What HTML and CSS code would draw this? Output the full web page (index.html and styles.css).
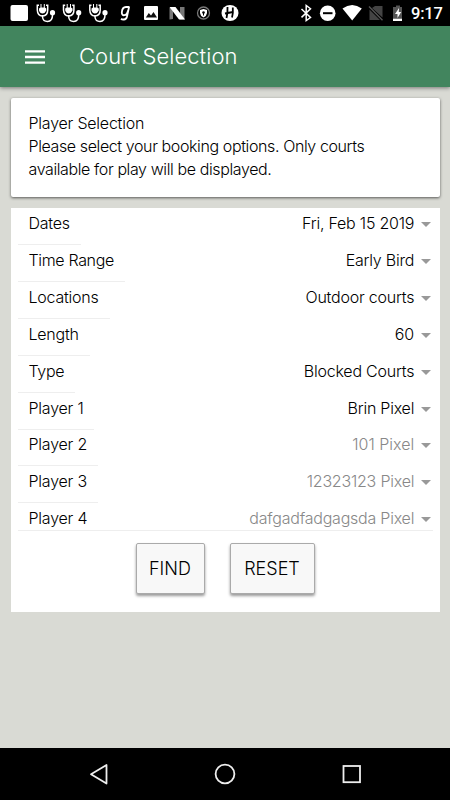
FILE: index.html
```html
<!DOCTYPE html>
<html lang="en">
<head>
<meta charset="utf-8">
<title>Court Selection</title>
<link rel="stylesheet" href="styles.css">
</head>
<body>
<div class="status">
  <svg width="290" height="26" viewBox="0 0 290 26">
    <defs>
      <g id="steth" fill="none" stroke="#fff">
        <path d="M2.500 5.200H.8V10q.2 5.800 5.200 6Q11.200 15.800 11.200 10V5.200H9.500" stroke-width="1.500"/>
        <path d="M2.500 8.500L4 7.500V4H5V7.500H7.300V4H8.300V7.500L9.800 8.500V10.500Q8.500 13.500 6 13.500Q3.500 13.500 2.500 10.500Z" fill="#fff" stroke="none"/>
        <path d="M6 15V17Q6.500 21.500 11 21.500Q16 21.300 16 15" stroke-width="1.500"/>
        <circle cx="16" cy="12.700" r="2.600" fill="#fff" stroke="none"/>
      </g>
    </defs>
    <rect x="10.500" y="5" width="17.500" height="16" rx="2" fill="#fff"/>
    <use href="#steth" x="36.500"/><use href="#steth" x="62.700"/><use href="#steth" x="89"/>
    <path d="M129 7h-3q-3.800 0-4.200 5.500q0 3 2.500 2.700q2.800-.4 3.700-4.500M129.200 6.200l-2.200 10.300q-.8 3.300-3.500 3q-1.700-.1-2.500-.8" fill="none" stroke="#fff" stroke-width="1.800"/>
    <rect x="144" y="6" width="14" height="14" rx="1" fill="#fff"/>
    <path d="M145.800 17.500l3-4.500 2.200 2.500 2.500-3.500 3.500 5.500z" fill="#111"/>
    <path d="M169.500 8l3.500-1v12l-3.500.5zM180 7h4.500v12.500H180z" fill="#777"/>
    <path d="M169.500 7h6l9.500 12.500h-6z" fill="#fff"/>
    <circle cx="203.500" cy="13" r="6" fill="none" stroke="#777" stroke-width="1.300"/>
    <path d="M200 10l3.500-1 3.500 1v3q-.3 3-3.500 4.500q-3.200-1.500-3.500-4.500z" fill="#fff"/>
    <circle cx="203.500" cy="12.500" r="1.300"/><path d="M203 12.500h1v3h-1z"/>
    <ellipse cx="230" cy="13" rx="8.500" ry="8" fill="#fff"/>
    <path d="M227.500 7q.3 6-1 11M232.800 7.500q.5 6-.8 10M225 13.500l8-1.500" stroke="#000" stroke-width="1.800" fill="none"/>
  </svg>
  <svg width="112" height="26" viewBox="290 0 112 26">
    <path d="M301.500 9l9 8.500-4.300 3V5.500l4.300 3.200-9 8.700" fill="none" stroke="#fff" stroke-width="1.500"/>
    <circle cx="327.700" cy="13.200" r="7.800" fill="#fff"/><path d="M323 12.200h9.500v2H323z"/>
    <path d="M342.500 8.500q9.700-7 19.300 0L352.200 20.500z" fill="#fff"/>
    <path d="M372 8l3-2h7.500v11.500zM369.500 9.500L380 20h-10.500z" fill="#444"/>
    <path d="M369 6.500l13.500 13.700" stroke="#555" stroke-width="1.400"/>
    <path d="M393 7h3V5.500h4V7h3v11h-10z" fill="#555"/><path d="M393 18.500h10V21h-10z" fill="#fff"/>
    <path d="M399 8l-4 6h2.500v4l3.700-6h-2.400z" fill="#fff"/>
  </svg>
  <span class="clock">9:17</span>
</div>
<header class="bar">
  <svg class="menu" width="20" height="14" viewBox="0 0 20 14"><path d="M0 1.300h20M0 7h20M0 12.700h20" stroke="#fff" stroke-width="2.300"/></svg>
  <h1>Court Selection</h1>
</header>
<main>
  <section class="card">
    <p>Player Selection</p>
    <p class="body">Please select your booking options. Only courts</p>
    <p class="body">available for play will be displayed.</p>
  </section>
  <section class="form">
    <div class="row"><span class="label">Dates</span><span class="value">Fri, Feb 15 2019</span></div>
    <div class="row"><span class="label tight">Time Range</span><span class="value">Early Bird</span></div>
    <div class="row"><span class="label">Locations</span><span class="value">Outdoor courts</span></div>
    <div class="row"><span class="label">Length</span><span class="value digits">60</span></div>
    <div class="row"><span class="label tight">Type</span><span class="value">Blocked Courts</span></div>
    <div class="row"><span class="label">Player 1</span><span class="value">Brin Pixel</span></div>
    <div class="row"><span class="label">Player 2</span><span class="value digits dim">101 Pixel</span></div>
    <div class="row"><span class="label">Player 3</span><span class="value dim">12323123 Pixel</span></div>
    <div class="row last"><span class="label">Player 4</span><span class="value dim">dafgadfadgagsda Pixel</span></div>
    <div class="actions"><button class="find">FIND</button><button class="reset">RESET</button></div>
  </section>
</main>
<nav class="nav">
  <svg width="450" height="52" viewBox="0 0 450 52" fill="none" stroke="#eee" stroke-width="1.800">
    <path d="M106.500 17v18.500L91 26.200z" stroke-linejoin="round"/><circle cx="225" cy="26" r="9.400"/><rect x="343.500" y="18" width="16.500" height="16.200"/>
  </svg>
</nav>
</body>
</html>
```

FILE: styles.css
```css
* { box-sizing: border-box; }
body { margin: 0; width: 450px; height: 800px; display: flex; flex-direction: column; overflow: hidden; background: #d9dad4; color: #000; font: 300 16px/23px Inter, sans-serif; letter-spacing: -.22px; }
.status { height: 26px; display: flex; background: #000; flex: none; letter-spacing: 0; }
.status svg { flex: none; }
.status svg + svg { width: 112px; margin-right: 9px; }
.clock { color: #fff; font: 500 16.500px/27px Roboto, sans-serif; letter-spacing: -.2px; }
.bar { height: 61px; flex: none; display: flex; align-items: center; gap: 34px; padding-left: 25px; background: #42855e; box-shadow: 0 1px 4px rgba(0,0,0,.45); }
h1 { margin: 0; color: #fff; font-size: 22px; font-weight: 300; letter-spacing: .07px; }
main { flex: 1; padding: 11px 10px 0 11px; }
.card { height: 99px; padding: 14px 17.500px; background: #fff; border-radius: 2px; box-shadow: 0 1px 3px rgba(0,0,0,.6); }
.card p { margin: 0; white-space: nowrap; }
.card .body { letter-spacing: -.39px; }
.form { height: 403.500px; margin-top: 11px; padding: 0 7px; background: #fff; }
.row { height: 36.908px; display: flex; justify-content: space-between; align-items: flex-start; }
.label { height: 37px; padding: 4px 11px 0 10.500px; border-bottom: 1px solid #eee; white-space: nowrap; }
.value { display: flex; align-items: center; gap: 6.300px; padding: 4px 2.500px 0 0; white-space: nowrap; }
.value::after { content: ""; border: 5.500px solid transparent; border-width: 5px 5.500px 0; border-top-color: #999; margin-top: 2px; }
.tight { letter-spacing: -.34px; }
.digits { letter-spacing: 0; }
.dim { color: #888; }
.last { height: 28px; border-bottom: 1px solid #eee; }
.last .label { height: 26px; border: 0; }
.actions { display: flex; gap: 25px; padding: 12px 0 0 117.500px; }
button { height: 51px; padding: 0; color: #000; font: 300 18px/49px Inter, sans-serif; background: #f8f8f8; border: 1px solid #aaa; border-radius: 2px; box-shadow: 0 2px 3px rgba(0,0,0,.4); }
.find { width: 69px; }
.reset { width: 85px; }
.nav { height: 52px; flex: none; background: #000; }
```
